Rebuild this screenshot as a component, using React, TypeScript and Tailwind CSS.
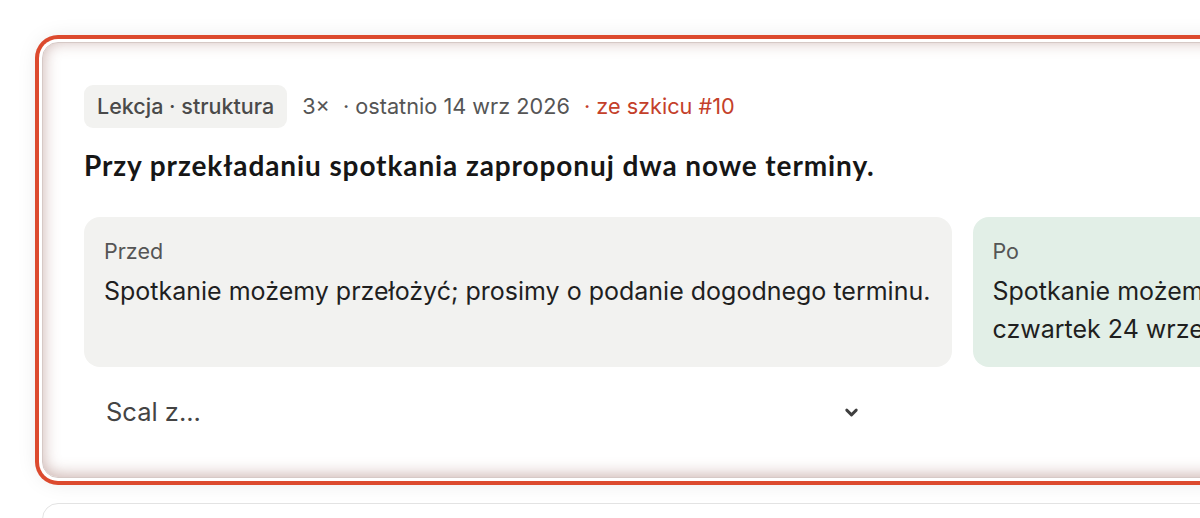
import React from "react";

export default function App() {
  return (
    <div className="w-[1200px] h-[518px] overflow-hidden bg-white relative" style={{ fontFamily: "Inter, 'Noto Sans', sans-serif" }}>
      <div className="pl-[42px] pt-[42px] flex flex-col gap-[25px]">
        <div className="w-[1840px] shrink-0 rounded-[16px] border border-[#d6c9c6] bg-white px-[41px] pt-[42px] pb-[40px] ring-[4px] ring-[#dc4a2e] ring-offset-[3px] ring-offset-white shadow-[0_0_24px_rgba(0,0,0,0.15)] inset-shadow-[0_-2px_16px_rgba(130,70,60,0.42)]">
          <div className="flex items-center text-[21.7px] text-[#555555]">
            <span className="rounded-[9px] bg-[#f2f2f0] px-[13px] h-[43px] flex items-center text-[21.5px] font-medium text-[#4a4a4a]">Lekcja · struktura</span>
            <span className="ml-[15px]">3×</span>
            <span className="ml-[13px]">· ostatnio 14 wrz 2026</span>
            <span className="ml-[14px] text-[#c4402a]">· ze szkicu #10</span>
          </div>
          <h2 className="mt-[19px] text-[28px] font-bold text-[#161616] leading-[36px] tracking-[0.9px]" style={{ fontFamily: "Lato, 'Noto Sans', sans-serif" }}>
            Przy przekładaniu spotkania zaproponuj dwa nowe terminy.
          </h2>
          <div className="mt-[34px] grid grid-cols-2 gap-[21px]">
            <div className="rounded-[16px] bg-[#f2f2f0] px-[20px] pt-[19px] h-[150px]">
              <div className="text-[21.5px] text-[#555555] leading-[30px]">Przed</div>
              <div className="mt-[6px] text-[25px] text-[#1f1f1f] leading-[38px]">Spotkanie możemy przełożyć; prosimy o podanie dogodnego terminu.</div>
            </div>
            <div className="rounded-[16px] bg-[#e2efe7] px-[20px] pt-[19px] h-[150px]">
              <div className="text-[21.5px] text-[#555555] leading-[30px]">Po</div>
              <div className="mt-[6px] text-[25px] text-[#1f1f1f] leading-[38px] w-[700px]">Spotkanie możemy przełożyć — proponujemy środę 23 lub czwartek 24 września o 10:00.</div>
            </div>
          </div>
          <div className="mt-[20px] w-[787px] h-[50px] flex items-center justify-between pl-[22px] pr-[10px] text-[25.5px] text-[#444444]">
            <span>Scal z...</span>
            <svg width="19" height="19" viewBox="0 0 24 24" fill="none" stroke="#3f3f3f" strokeWidth="3.6" strokeLinecap="round" strokeLinejoin="round"><path d="M6 9l6 6 6-6" /></svg>
          </div>
        </div>
        <div className="w-[1840px] h-[80px] shrink-0 rounded-[16px] border border-[#e3e3e3] bg-white" />
      </div>
    </div>
  );
}
